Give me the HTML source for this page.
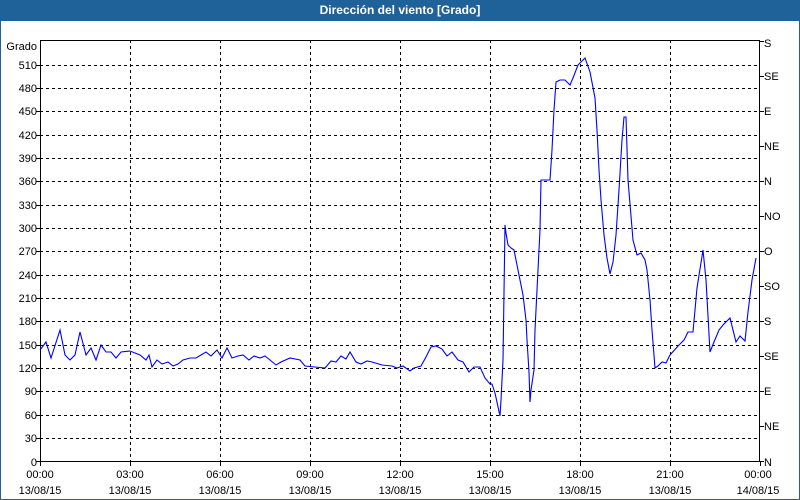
<!DOCTYPE html>
<html><head><meta charset="utf-8"><style>
html,body{margin:0;padding:0;background:#fff;}
body{width:800px;height:500px;overflow:hidden;position:relative;font-family:"Liberation Sans",sans-serif;}
#frame{position:absolute;left:0;top:0;width:798px;height:498px;border:1px solid #1f6199;}
#title{position:absolute;left:0;top:0;width:800px;height:21px;background:#1f6199;color:#fff;font-weight:bold;font-size:12px;text-align:center;line-height:20px;}
svg{position:absolute;left:0;top:0;}
svg text{font-family:"Liberation Sans",sans-serif;font-size:11px;fill:#000;}
</style></head><body>
<div id="frame"></div>
<div id="title">Dirección del viento [Grado]</div>
<svg width="800" height="500" viewBox="0 0 800 500">
<g stroke="#000" stroke-width="1" stroke-dasharray="3,3" fill="none" shape-rendering="crispEdges">
<path d="M40 65.5H760M40 88.5H760M40 111.5H760M40 135.5H760M40 158.5H760M40 181.5H760M40 205.5H760M40 228.5H760M40 251.5H760M40 275.5H760M40 298.5H760M40 321.5H760M40 345.5H760M40 368.5H760M40 391.5H760M40 415.5H760M40 438.5H760"/>
<path d="M130.5 40V462M220.5 40V462M310.5 40V462M400.5 40V462M490.5 40V462M580.5 40V462M670.5 40V462"/>
</g>
<g stroke="#000" fill="none" shape-rendering="crispEdges">
<rect x="40.5" y="40.5" width="719" height="421"/>
<path d="M40.5 462V466M130.5 462V466M220.5 462V466M310.5 462V466M400.5 462V466M490.5 462V466M580.5 462V466M670.5 462V466M760.5 462V466"/>
<path d="M36 65.5H40M36 88.5H40M36 111.5H40M36 135.5H40M36 158.5H40M36 181.5H40M36 205.5H40M36 228.5H40M36 251.5H40M36 275.5H40M36 298.5H40M36 321.5H40M36 345.5H40M36 368.5H40M36 391.5H40M36 415.5H40M36 438.5H40M36 461.5H40"/>
<path d="M760 41.5H764M760 76.5H764M760 111.5H764M760 146.5H764M760 181.5H764M760 216.5H764M760 251.5H764M760 286.5H764M760 321.5H764M760 356.5H764M760 391.5H764M760 426.5H764M760 461.5H764"/>
</g>
<g text-anchor="end">
<text x="37" y="50">Grado</text>
<text x="37" y="69">510</text><text x="37" y="92">480</text><text x="37" y="115">450</text><text x="37" y="139">420</text><text x="37" y="162">390</text><text x="37" y="185">360</text><text x="37" y="209">330</text><text x="37" y="232">300</text><text x="37" y="255">270</text><text x="37" y="279">240</text><text x="37" y="302">210</text><text x="37" y="325">180</text><text x="37" y="349">150</text><text x="37" y="372">120</text><text x="37" y="395">90</text><text x="37" y="419">60</text><text x="37" y="442">30</text><text x="37" y="466">0</text>
</g>
<g>
<text x="764" y="47">S</text><text x="764" y="80">SE</text><text x="764" y="115">E</text><text x="764" y="150">NE</text><text x="764" y="185">N</text><text x="764" y="220">NO</text><text x="764" y="255">O</text><text x="764" y="290">SO</text><text x="764" y="325">S</text><text x="764" y="360">SE</text><text x="764" y="395">E</text><text x="764" y="430">NE</text><text x="764" y="466">N</text>
</g>
<g text-anchor="middle">
<text x="40" y="478">00:00</text><text x="40" y="494">13/08/15</text>
<text x="130" y="478">03:00</text><text x="130" y="494">13/08/15</text>
<text x="220" y="478">06:00</text><text x="220" y="494">13/08/15</text>
<text x="310" y="478">09:00</text><text x="310" y="494">13/08/15</text>
<text x="400" y="478">12:00</text><text x="400" y="494">13/08/15</text>
<text x="490" y="478">15:00</text><text x="490" y="494">13/08/15</text>
<text x="580" y="478">18:00</text><text x="580" y="494">13/08/15</text>
<text x="670" y="478">21:00</text><text x="670" y="494">13/08/15</text>
<text x="758" y="478">00:00</text><text x="758" y="494">14/08/15</text>
</g>
<polyline fill="none" stroke="#0000ff" stroke-width="1.1" points="40,350 46,342 51,358 60,330 65,355 70,360 75,355 80,332 86,355 91,348 96,360 101,345 106,352 111,352 116,358 121,352 130,351 140,355 146,360 149,355 152,367 157,360 162,364 168,362 173,366 178,364 183,360 190,358 196,358 201,355 206,352 211,356 217,350 222,358 227,348 232,358 238,356 243,355 249,360 254,356 260,358 265,356 270,360 276,365 281,362 290,358 300,360 305,366 315,367 325,368 331,361 336,362 341,356 346,359 350,352 356,362 361,364 367,361 372,362 382,365 392,366 397,368 403,366 410,371 414,368 421,366 426,357 431,347 436,346 442,349 447,356 452,352 458,360 463,362 469,372 474,367 480,367 485,378 490,384 492,384 495,393 500,416 501,400 503,360 505,225 506,233 508,245 511,248 514,250 518,270 523,295 526,320 527,340 529,372 530,402 531,390 534,370 535,330 538,270 540,230 541,180 550,180 552,150 554,110 556,82 560,80 565,80 570,85 573,78 578,65 585,58 590,72 595,98 597,130 599,170 601,200 604,235 607,258 610,274 613,262 616,235 619,190 622,140 624,117 626,117 628,180 633,240 637,255 641,253 645,260 647,270 650,300 652,330 655,368 658,366 662,362 666,363 670,355 679,345 684,340 688,332 693,332 697,288 703,250 706,280 710,352 714,342 719,330 723,325 730,318 736,342 740,336 745,341 748,312 752,280 756,258"/>
</svg>
</body></html>
